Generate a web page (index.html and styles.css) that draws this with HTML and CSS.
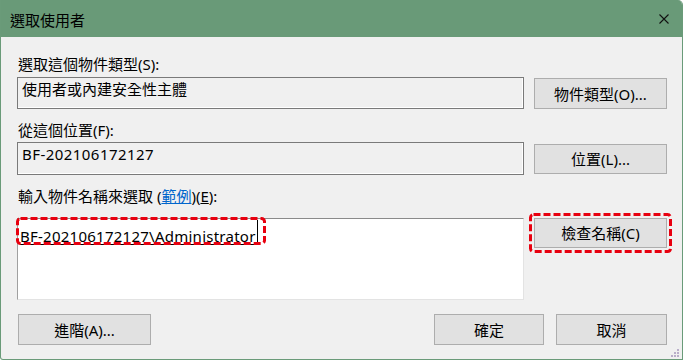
FILE: index.html
```html
<!DOCTYPE html>
<html lang="zh-Hant">
<head>
    <meta charset="UTF-8">
    <title>選取使用者</title>
    <link rel="stylesheet" href="styles.css">
</head>
<body>

    <div class="window">
        <!-- Title Bar -->
        <div class="titlebar">
            <span class="title">選取使用者</span>
            <svg class="close" width="10" height="10" viewBox="0 0 10 10">
                <path d="M0.5 0.5 L9.5 9.5 M9.5 0.5 L0.5 9.5" stroke="#111" stroke-width="1.1" fill="none"/>
            </svg>
        </div>

        <div class="content">
            <div class="label">選取這個物件類型(S):</div>
            <div class="row row-one">
                <div class="field">使用者或內建安全性主體</div>
                <button class="btn">物件類型(O)...</button>
            </div>

            <div class="label label-gap">從這個位置(F):</div>
            <div class="row row-two">
                <div class="field field-tall"><span class="latin">BF-202106172127</span></div>
                <button class="btn btn-short">位置(L)...</button>
            </div>

            <div class="label label-gap">輸入物件名稱來選取 (<a class="link">範例</a>)(<u>E</u>):</div>
            <div class="row row-three">
                <div class="names">
                    <div class="name-line"><span class="name">BF-202106172127\Administrator</span><span class="caret"></span></div>
                    <!-- highlight mark -->
                    <svg class="mark mark-text" width="250" height="28">
                        <rect x="1.5" y="1.5" width="247" height="25" rx="3" />
                    </svg>
                </div>
                <div class="check">
                    <button class="btn btn-short">檢查名稱(C)</button>
                    <svg class="mark mark-btn" width="143" height="40">
                        <rect x="1.5" y="1.5" width="140" height="37" rx="3" />
                    </svg>
                </div>
            </div>

            <div class="actions">
                <button class="btn">進階(A)...</button>
                <div class="spacer"></div>
                <button class="btn btn-ok">確定</button>
                <button class="btn btn-cancel">取消</button>
            </div>
        </div>

        <!-- Size Grip -->
        <svg class="grip" width="10" height="10" viewBox="0 0 10 10">
            <rect x="7" y="1" width="2" height="2"/>
            <rect x="4" y="4" width="2" height="2"/>
            <rect x="7" y="4" width="2" height="2"/>
            <rect x="1" y="7" width="2" height="2"/>
            <rect x="4" y="7" width="2" height="2"/>
            <rect x="7" y="7" width="2" height="2"/>
        </svg>
    </div>

</body>
</html>
```

FILE: styles.css
```css
* {
    margin: 0;
    padding: 0;
    box-sizing: border-box;
}

body {
    background: #ffffff;
    font-family: "Noto Sans", "Noto Sans CJK TC", sans-serif;
    font-size: 15px;
    color: #000;
}

.window {
    position: relative;
    width: 683px;
    height: 360px;
    background: #f0f0f0;
    border: 1px solid #6a9b79;
    border-top: none;
    border-top-right-radius: 5px;
    border-bottom-left-radius: 3px;
    overflow: hidden;
}

/* Title Bar */
.titlebar {
    height: 37px;
    background: #699a78;
    display: flex;
    align-items: center;
    justify-content: space-between;
    padding: 2px 13px 0 9px;
}

.title {
    line-height: 20px;
}

.close {
    display: block;
    margin-top: -2px;
}

.content {
    padding: 17px 15px 0 16px;
}

.label {
    line-height: 20px;
    padding-left: 1px;
}

.label-gap {
    margin-top: 11px;
}

.link {
    color: #0066cc;
    text-decoration: underline;
}

.row {
    display: grid;
    grid-template-columns: 507px 133px;
    column-gap: 10px;
}

.row-one {
    margin-top: 3px;
    align-items: end;
}

.row-two {
    margin-top: 2px;
    align-items: center;
}

.row-three {
    margin-top: 12px;
    align-items: start;
}

.field {
    height: 32px;
    border: 1px solid #7a7a7a;
    box-shadow: inset -1px -1px 0 #ffffff;
    padding: 1px 4px 0;
    line-height: 20px;
}

.field-tall {
    height: 33px;
}

.latin {
    letter-spacing: 0.45px;
}

.names {
    position: relative;
    height: 82px;
    background: #ffffff;
    border: 1px solid #e3e3e3;
    border-top-color: #8a8a8a;
    border-left-color: #a0a0a0;
}

.name-line {
    display: flex;
    align-items: flex-start;
    padding: 7px 0 0 2px;
    line-height: 20px;
}

.name {
    letter-spacing: 0.25px;
    text-decoration: underline;
    text-underline-offset: 2px;
}

.caret {
    width: 1px;
    height: 24px;
    margin: -6px 0 0 1px;
    background: #000;
}

.check {
    position: relative;
    height: 30px;
}

.check .btn {
    width: 100%;
}

.btn {
    height: 31px;
    background: #e1e1e1;
    border: 1px solid #adadad;
    font-family: inherit;
    font-size: 15px;
    color: #000;
    line-height: 20px;
    padding: 0;
}

.btn-short {
    height: 30px;
}

/* Red highlight marks */
.mark {
    position: absolute;
    fill: none;
    stroke: #e8000f;
    stroke-width: 3;
    stroke-dasharray: 7 3;
}

.mark-text {
    left: -2px;
    top: -2px;
}

.mark-btn {
    left: -5px;
    top: -5px;
}

.actions {
    display: flex;
    margin-top: 14px;
    padding-left: 1px;
}

.actions .btn {
    width: 133px;
}

.spacer {
    flex: 1;
}

.actions .btn-ok {
    width: 110px;
}

.actions .btn-cancel {
    width: 111px;
    margin: 0 0 0 12px;
}

.grip {
    position: absolute;
    right: 2px;
    bottom: 1px;
    fill: #b9aec9;
}
```
